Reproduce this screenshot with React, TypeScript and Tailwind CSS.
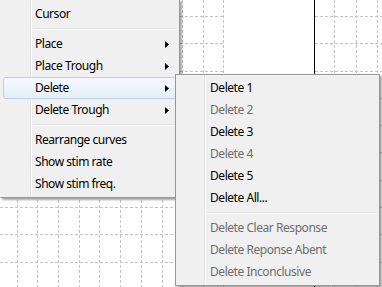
import React from "react";

type Item =
  | { kind: "item"; label: string; disabled?: boolean; submenu?: boolean; active?: boolean }
  | { kind: "sep" };

const mainItems: Item[] = [
  { kind: "item", label: "Cursor" },
  { kind: "sep" },
  { kind: "item", label: "Place", submenu: true },
  { kind: "item", label: "Place Trough", submenu: true },
  { kind: "item", label: "Delete", submenu: true, active: true },
  { kind: "item", label: "Delete Trough", submenu: true },
  { kind: "sep" },
  { kind: "item", label: "Rearrange curves" },
  { kind: "item", label: "Show stim rate" },
  { kind: "item", label: "Show stim freq." },
];

const subItems: Item[] = [
  { kind: "item", label: "Delete 1" },
  { kind: "item", label: "Delete 2", disabled: true },
  { kind: "item", label: "Delete 3" },
  { kind: "item", label: "Delete 4", disabled: true },
  { kind: "item", label: "Delete 5" },
  { kind: "item", label: "Delete All..." },
  { kind: "sep" },
  { kind: "item", label: "Delete Clear Response", disabled: true },
  { kind: "item", label: "Delete Reponse Abent", disabled: true },
  { kind: "item", label: "Delete Inconclusive", disabled: true },
];

function Arrow() {
  return (
    <svg width="4" height="7" viewBox="0 0 4 7" className="shrink-0">
      <polygon points="0,0 4,3.5 0,7" fill="#000" />
    </svg>
  );
}

function MenuRows({ items, textPad }: { items: Item[]; textPad: string }) {
  return (
    <>
      {items.map((it, i) =>
        it.kind === "sep" ? (
          <div key={i} className="h-[8px] flex items-center pl-[30px] pr-[1px]">
            <div className="w-full">
              <div className="h-px bg-[#e2e3e3]" />
              <div className="h-px bg-white" />
            </div>
          </div>
        ) : (
          <div
            key={i}
            className={
              "relative h-[22px] flex items-center rounded-[3px] border pr-[7px] " +
              textPad +
              " " +
              (it.active
                ? "border-[#b9d1ec] bg-gradient-to-b from-[#f5f9fe] to-[#e6eef9]"
                : "border-transparent")
            }
          >
            <span
              className={
                "flex-1 text-[12px] leading-none whitespace-nowrap tracking-[-0.45px] " +
                (it.disabled ? "text-[#6d6d6d]" : "text-black")
              }
            >
              {it.label}
            </span>
            {it.submenu && <Arrow />}
          </div>
        )
      )}
    </>
  );
}

function PlotGrid({ width, height, xs, ys }: { width: number; height: number; xs: number[]; ys: number[] }) {
  return (
    <svg width={width} height={height} className="block">
      {xs.map((x) => (
        <line key={"v" + x} x1={x + 0.5} y1={0} x2={x + 0.5} y2={height} stroke="#c4c4c4" strokeDasharray="3 2" />
      ))}
      {ys.map((y) => (
        <line key={"h" + y} x1={0} y1={y + 0.5} x2={width} y2={y + 0.5} stroke="#c4c4c4" strokeDasharray="3 2" />
      ))}
    </svg>
  );
}

export default function App() {
  const ys = [16, 43, 71, 98, 125, 152, 180, 207, 234, 262];
  return (
    <div className="relative w-[382px] h-[287px] overflow-hidden bg-white font-['Noto_Sans',sans-serif]">
      <div className="flex h-full">
        <div className="w-[224px] h-full">
          <PlotGrid width={224} height={287} xs={[17, 37, 58, 79, 99, 120, 141, 162, 182, 203, 223]} ys={ys} />
        </div>
        <div className="w-[90px] h-full" />
        <div className="flex-1 h-full border-l border-black">
          <PlotGrid width={67} height={287} xs={[19, 41, 62]} ys={ys} />
        </div>
      </div>

      {/* Main context menu */}
      <div className="absolute left-0 top-[-1px] w-[180px] border border-[#979797] border-l-[#f0f0f0] bg-[#f0f0f0] pt-[3px] pb-[2px] px-[2px] shadow-[2px_2px_2px_rgba(0,0,0,0.35)]">
        <div className="absolute left-[29px] top-0 bottom-0 flex">
          <div className="w-px bg-[#e2e3e3]" />
          <div className="w-px bg-white" />
        </div>
        <div className="relative">
          <MenuRows items={mainItems} textPad="pl-[31px]" />
        </div>
      </div>

      {/* Submenu */}
      <div className="absolute left-[175px] top-[74px] w-[205px] border border-[#979797] bg-[#f0f0f0] pt-[2px] pb-[2px] px-[1px] shadow-[2px_2px_2px_rgba(0,0,0,0.35)]">
        <div className="absolute left-[28px] top-0 bottom-0 flex">
          <div className="w-px bg-[#e2e3e3]" />
          <div className="w-px bg-white" />
        </div>
        <div className="relative">
          <MenuRows items={subItems} textPad="pl-[32px]" />
        </div>
      </div>
    </div>
  );
}
